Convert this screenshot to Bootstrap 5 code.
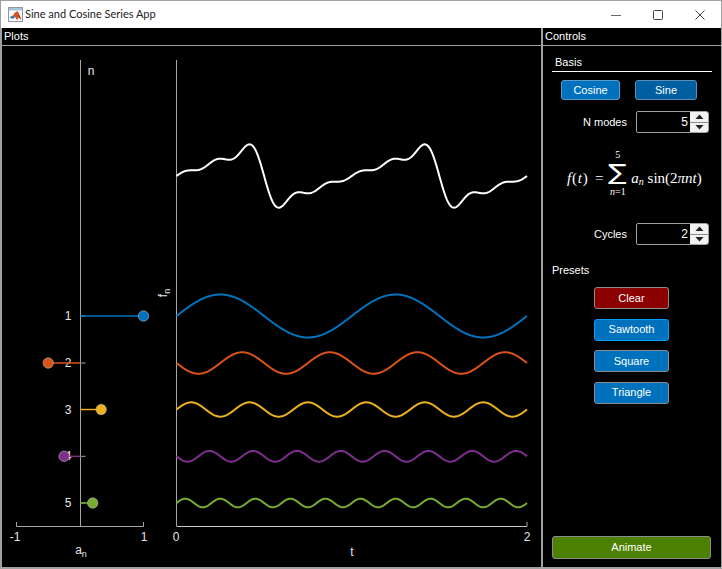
<!DOCTYPE html>
<html lang="en">
<head>
    <meta charset="UTF-8">
    <meta name="viewport" content="width=device-width, initial-scale=1.0">
    <title>Sine and Cosine Series App</title>
    <link href="https://cdn.jsdelivr.net/npm/bootstrap@5.3.3/dist/css/bootstrap.min.css" rel="stylesheet">
    <style>
        html, body {
            height: 100%;
            margin: 0;
            overflow: hidden;
        }

        body {
            background-color: #000;
            font-family: "Liberation Sans", Arial, sans-serif;
            font-size: 11px;
            color: #fff;
        }

        .app-window {
            width: 722px;
            height: 569px;
            border: solid #a0a0a0;
            border-width: 1px 1px 2px 2px;
        }

        .title-bar {
            height: 27px;
            background-color: #fff;
            color: #222;
            font-family: Lato, "Noto Sans", sans-serif;
            font-size: 11px;
            margin-left: -1px;
        }

        .title-icon {
            margin-left: 7px;
        }

        .title-text {
            margin-left: 2px;
        }

        .win-btn {
            width: 42px;
            height: 27px;
        }

        .panels {
            height: 539px;
            background-color: #a0a0a0;
            gap: 2px;
        }

        .panel-box {
            background-color: #000;
        }

        .panel-plots {
            width: 539px;
        }

        .panel-controls {
            width: 178px;
        }

        .panel-head {
            height: 18px;
            line-height: 17px;
            padding-left: 2px;
            border-bottom: 1px solid #a0a0a0;
        }

        .plot-svg {
            display: block;
        }

        .plot-svg text {
            font-family: "Liberation Sans", Arial, sans-serif;
            font-size: 12px;
            fill: #e6e6e6;
        }

        .controls-body {
            padding: 9px 9px 8px 9px;
        }

        .basis-title {
            height: 17px;
            line-height: 15px;
            padding-left: 3px;
            border-bottom: 1px solid #fff;
            margin-bottom: 8px;
        }

        .basis-btns {
            padding-left: 9px;
            gap: 15px;
            margin-bottom: 11px;
        }

        .app-btn {
            font-size: 11px;
            line-height: 1;
            padding: 0;
            color: #fff;
            background-color: #0072bd;
            border: 1px solid #8c8c8c;
            border-radius: 3px;
            height: 22px;
        }

        .btn-cosine {
            width: 59px;
            height: 20px;
            border-color: #5b9ccb;
        }

        .btn-sine {
            width: 62px;
            height: 20px;
            background-color: #005fa0;
            border-color: #5b8fb5;
        }

        .preset-btn {
            width: 75px;
        }

        .btn-clear {
            background-color: #8b0000;
        }

        .btn-focus {
            border-color: #0a9cf5;
        }

        .btn-animate {
            width: 159px;
            height: 23px;
            background-color: #4b8000;
        }

        .field-row {
            margin-right: 3px;
        }

        .field-label {
            line-height: 22px;
            margin-right: 9px;
        }

        .spin-box {
            width: 73px;
            height: 22px;
            border: 1px solid #a0a0a0;
            border-radius: 2px 3px 3px 2px;
            overflow: hidden;
        }

        .spin-value {
            flex: 1;
            min-width: 0;
            text-align: right;
            font-size: 12px;
            line-height: 20px;
            padding-right: 2px;
        }

        .spin-arrows {
            width: 18px;
            background-color: #fff;
        }

        .spin-arrow {
            flex: 1;
            background-color: #f2f2f2;
        }

        .spin-arrow + .spin-arrow {
            border-top: 1px solid #8c8c8c;
        }

        .formula {
            height: 90px;
            font-family: "Liberation Serif", "Times New Roman", serif;
            font-size: 15px;
            white-space: nowrap;
            padding-left: 15px;
        }

        .formula-left {
            letter-spacing: 0.8px;
            word-spacing: 2px;
        }

        .formula i sub {
            font-size: 10px;
        }

        .sum-block {
            width: 19px;
            margin: 0 4px 10px;
            line-height: 1;
        }

        .sum-sign {
            font-family: "DejaVu Sans", sans-serif;
            font-size: 22px;
            line-height: 26px;
            height: 26px;
            transform: scaleX(1.25);
        }

        .sum-limit {
            font-size: 10px;
            line-height: 11px;
            height: 11px;
        }

        .presets-title {
            margin-top: 18px;
            margin-bottom: 10px;
            line-height: 14px;
        }

        .preset-list {
            gap: 9.5px;
            margin-right: 1px;
        }
    </style>
</head>
<body>
    <div class="app-window d-flex flex-column">
        <!-- Title bar -->
        <div class="title-bar d-flex align-items-center flex-shrink-0">
            <svg class="title-icon" width="15" height="15" viewBox="0 0 15 15">
                <rect x="0.5" y="0.5" width="14" height="14" fill="#fafbfd" stroke="#8d98a8"/>
                <rect x="1" y="1" width="13" height="2.5" fill="#a9c3de"/>
                <path d="M1.5 10.5 L5 8.5 L7 5.5 L9.5 4 L13.5 13 L11 10.5 L9 13 L7 10 Z" fill="#d9541e"/>
                <path d="M1.5 10.5 L5 8.5 L7 10 L5 12 Z" fill="#2f7fc0"/>
                <path d="M9.5 4 L13.5 13 L11 10.5 Z" fill="#a8321a"/>
            </svg>
            <span class="title-text">Sine and Cosine Series App</span>
            <div class="ms-auto d-flex">
                <div class="win-btn d-flex align-items-center justify-content-center">
                    <svg width="12" height="12" viewBox="0 0 12 12"><path d="M1 6.5H11" stroke="#666" fill="none"/></svg>
                </div>
                <div class="win-btn d-flex align-items-center justify-content-center">
                    <svg width="12" height="12" viewBox="0 0 12 12"><rect x="1.5" y="1.5" width="9" height="9" rx="1" stroke="#444" fill="none"/></svg>
                </div>
                <div class="win-btn d-flex align-items-center justify-content-center">
                    <svg width="12" height="12" viewBox="0 0 12 12"><path d="M1.5 1.5L10.5 10.5M10.5 1.5L1.5 10.5" stroke="#444" fill="none"/></svg>
                </div>
            </div>
        </div>

        <div class="panels d-flex">
            <!-- Plots -->
            <section class="panel-box panel-plots flex-shrink-0">
                <div class="panel-head">Plots</div>
                <svg class="plot-svg" id="plotArea" width="539" height="521" viewBox="2 46 539 521"></svg>
            </section>

            <!-- Controls -->
            <section class="panel-box panel-controls flex-shrink-0 d-flex flex-column">
                <div class="panel-head">Controls</div>
                <div class="controls-body d-flex flex-column flex-grow-1">
                    <div class="basis-title">Basis</div>
                    <div class="basis-btns d-flex">
                        <button class="btn app-btn btn-cosine">Cosine</button>
                        <button class="btn app-btn btn-sine">Sine</button>
                    </div>
                    <div class="field-row d-flex justify-content-end">
                        <span class="field-label">N modes</span>
                        <div class="spin-box d-flex">
                            <span class="spin-value">5</span>
                            <div class="spin-arrows d-flex flex-column">
                                <div class="spin-arrow d-flex align-items-center justify-content-center">
                                    <svg width="9" height="5" viewBox="0 0 9 5"><path d="M0.5 5L4.5 0.5L8.5 5Z" fill="#222"/></svg>
                                </div>
                                <div class="spin-arrow d-flex align-items-center justify-content-center">
                                    <svg width="9" height="5" viewBox="0 0 9 5"><path d="M0.5 0L4.5 4.5L8.5 0Z" fill="#222"/></svg>
                                </div>
                            </div>
                        </div>
                    </div>
                    <div class="formula d-flex align-items-center">
                        <span class="formula-left"><i>f</i>(<i>t</i>) =</span>
                        <div class="sum-block d-flex flex-column align-items-center">
                            <span class="sum-limit">5</span>
                            <span class="sum-sign">∑</span>
                            <span class="sum-limit"><i>n</i>=1</span>
                        </div>
                        <span><i>a<sub>n</sub></i> sin(2<i>πnt</i>)</span>
                    </div>
                    <div class="field-row d-flex justify-content-end">
                        <span class="field-label">Cycles</span>
                        <div class="spin-box d-flex">
                            <span class="spin-value">2</span>
                            <div class="spin-arrows d-flex flex-column">
                                <div class="spin-arrow d-flex align-items-center justify-content-center">
                                    <svg width="9" height="5" viewBox="0 0 9 5"><path d="M0.5 5L4.5 0.5L8.5 5Z" fill="#222"/></svg>
                                </div>
                                <div class="spin-arrow d-flex align-items-center justify-content-center">
                                    <svg width="9" height="5" viewBox="0 0 9 5"><path d="M0.5 0L4.5 4.5L8.5 0Z" fill="#222"/></svg>
                                </div>
                            </div>
                        </div>
                    </div>
                    <div class="presets-title">Presets</div>
                    <div class="preset-list d-flex flex-column align-items-center">
                        <button class="btn app-btn preset-btn btn-clear">Clear</button>
                        <button class="btn app-btn preset-btn btn-focus">Sawtooth</button>
                        <button class="btn app-btn preset-btn">Square</button>
                        <button class="btn app-btn preset-btn">Triangle</button>
                    </div>
                    <button class="btn app-btn btn-animate mt-auto">Animate</button>
                </div>
            </section>
        </div>
    </div>

    <script>
        // Sawtooth coefficients, one row per mode
        const modes = [
            { n: 1, a: 1, color: '#0072bd', y: 316 },
            { n: 2, a: -1 / 2, color: '#d95319', y: 363 },
            { n: 3, a: 1 / 3, color: '#edb120', y: 409.5 },
            { n: 4, a: -1 / 4, color: '#7e2f8e', y: 456.3 },
            { n: 5, a: 1 / 5, color: '#77ac30', y: 503 }
        ];

        const x0 = 176.5, x1 = 527, axisY = 526, zeroX = 80, unitX = 63.5, ampY = 21.5;
        const grey = '#a6a6a6';

        function line(x1, y1, x2, y2, color, width) {
            return `<line x1="${x1}" y1="${y1}" x2="${x2}" y2="${y2}" stroke="${color}" stroke-width="${width || 1}"/>`;
        }

        function label(x, y, str, anchor) {
            return `<text x="${x}" y="${y}" text-anchor="${anchor || 'middle'}">${str}</text>`;
        }

        function curve(fn, baseY, color, width, scale) {
            let pts = [];
            for (let px = 0; px <= x1 - x0; px += 0.5) {
                const t = 2 * px / (x1 - x0);
                pts.push((x0 + px).toFixed(1) + ',' + (baseY - scale * fn(t)).toFixed(2));
            }
            return `<polyline points="${pts.join(' ')}" fill="none" stroke="${color}" stroke-width="${width}"/>`;
        }

        function renderPlots() {
            let out = '';

            // Left axes: coefficients
            out += line(80.5, 60, 80.5, axisY, grey);
            out += line(16.5, axisY + 0.5, 143.5, axisY + 0.5, grey);
            out += line(16.5, axisY + 0.5, 16.5, 522, grey);
            out += line(143.5, axisY + 0.5, 143.5, 522, grey);
            out += label(91, 75, 'n');
            out += label(15, 541, '-1');
            out += label(144, 541, '1');
            out += `<text x="81" y="554" text-anchor="middle">a<tspan font-size="9" dy="3">n</tspan></text>`;

            modes.forEach(m => {
                out += line(80.5, m.y, 85.5, m.y, grey);
                out += label(68, m.y + 4, m.n);
                out += line(80.5, m.y, zeroX + m.a * unitX, m.y, m.color, 1.4);
                out += `<circle cx="${zeroX + m.a * unitX}" cy="${m.y}" r="5.2" fill="${m.color}" stroke="#bbb" stroke-width="0.6"/>`;
            });

            // Right axes: the series
            out += line(x0, 60, x0, axisY, grey);
            out += line(x0, axisY + 0.5, x1, axisY + 0.5, '#c8c8c8');
            out += line(x1, axisY + 0.5, x1, 522, grey);
            out += label(176, 541, '0');
            out += label(527, 541, '2');
            out += label(352, 556, 't');
            out += `<text transform="translate(167,293) rotate(-90)" text-anchor="middle">f<tspan font-size="9" dy="3">n</tspan></text>`;

            modes.forEach(m => {
                out += curve(t => m.a * Math.sin(2 * Math.PI * m.n * t), m.y, m.color, 2, ampY);
            });
            const sum = t => modes.reduce((s, m) => s + m.a * Math.sin(2 * Math.PI * m.n * t), 0);
            out += curve(sum, 176, '#ffffff', 2, 20);

            document.getElementById('plotArea').innerHTML = out;
        }

        renderPlots();
    </script>
</body>
</html>
